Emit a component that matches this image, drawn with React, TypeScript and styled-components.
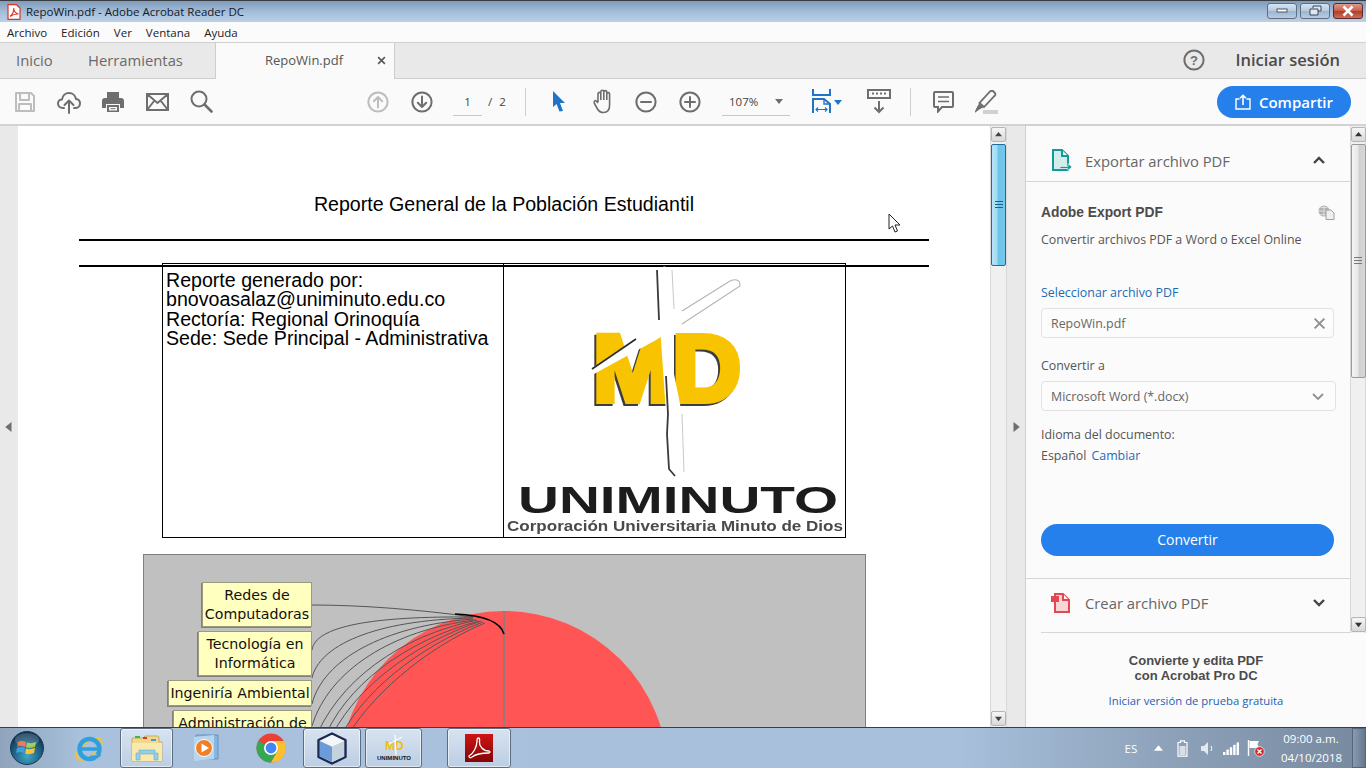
import React from 'react'
import styled, { createGlobalStyle } from 'styled-components'

const GlobalStyle = createGlobalStyle`
  html, body { margin: 0; padding: 0; height: 768px; overflow: hidden; background: #fafafa; }
  * { box-sizing: border-box; }
  body { font-family: "Open Sans", "Liberation Sans", sans-serif; color: #505050; }
`

const Screen = styled.div`
  width: 1366px;
  height: 768px;
  display: flex;
  flex-direction: column;
  overflow: hidden;
`

/* window chrome */
const TitleBar = styled.div`
  height: 22px;
  flex: none;
  display: flex;
  align-items: center;
  padding: 0 3px 0 7px;
  border-top: 1px solid #3a3d42;
  background: linear-gradient(180deg, #7f9cbb 0%, #a5bfdb 55%, #bcd0e6 100%);
`
const TitleText = styled.span`
  margin-left: 5px;
  font-size: 11.5px;
  color: #14181f;
`
const WindowButtons = styled.div`
  margin-left: auto;
  display: flex;
  gap: 3px;
  margin-top: -2px;
`
const WindowButton = styled.div<{ $close?: boolean }>`
  width: 30px;
  height: 16px;
  display: flex;
  align-items: center;
  justify-content: center;
  border-radius: 3px;
  border: 1px solid ${p => (p.$close ? '#5c2a2a' : '#5f6f82')};
  background: ${p =>
    p.$close
      ? 'linear-gradient(180deg, #dc9a8d 0%, #c9604c 48%, #b03c28 52%, #c9705c 100%)'
      : 'linear-gradient(180deg, #d6e3f0 0%, #b7cbe0 48%, #9db5cf 52%, #b8cde2 100%)'};
`
const MenuBar = styled.div`
  height: 20px;
  flex: none;
  display: flex;
  align-items: center;
  gap: 14px;
  padding-left: 7px;
  background: #fbfbfb;
  font-size: 11.5px;
  color: #222;
`
const TabBar = styled.div`
  height: 37px;
  flex: none;
  display: flex;
  align-items: stretch;
  background: #e9e9e9;
  border-top: 1px solid #d0d0d0;
  border-bottom: 1px solid #cdcdcd;
`
const NavTab = styled.div<{ $width: number }>`
  width: ${p => p.$width}px;
  display: flex;
  align-items: center;
  padding: 0 0 2px 16px;
  font-size: 14.8px;
  color: #6a6a6a;
`
const DocTab = styled.div`
  width: 180px;
  margin-bottom: -1px;
  padding-bottom: 2px;
  display: flex;
  align-items: center;
  background: #fafafa;
  border-left: 1px solid #cdcdcd;
  border-right: 1px solid #cdcdcd;
  font-size: 13px;
  color: #555;
`
const DocTabName = styled.span`
  margin-left: 49px;
`
const DocTabClose = styled.span`
  margin-left: auto;
  margin-right: 8px;
  display: flex;
`
const SignIn = styled.div`
  margin-left: auto;
  margin-right: 26px;
  padding-bottom: 2px;
  display: flex;
  align-items: center;
  gap: 30px;
  font-size: 16.5px;
  font-weight: 600;
  color: #4b4b4b;
`

/* toolbar */
const Toolbar = styled.div`
  height: 47px;
  flex: none;
  display: flex;
  align-items: center;
  padding-left: 3px;
  background: #fafafa;
  border-bottom: 2px solid #d2d2d2;
`
const ToolSlot = styled.div<{ $gapLeft?: number; $width?: number }>`
  width: ${p => p.$width ?? 44}px;
  margin-left: ${p => p.$gapLeft ?? 0}px;
  display: flex;
  align-items: center;
  justify-content: center;
  height: 30px;
  flex: none;
`
const PageField = styled.div`
  width: 29px;
  height: 28px;
  margin-left: 9px;
  display: flex;
  align-items: center;
  justify-content: center;
  border-bottom: 1px solid #c8c8c8;
  font-size: 11.5px;
  color: #444;
`
const PageTotal = styled.span`
  margin-left: 6px;
  width: 37px;
  font-size: 11.5px;
  word-spacing: 4px;
  color: #444;
`
const ToolDivider = styled.div<{ $gapLeft: number }>`
  width: 1px;
  height: 28px;
  margin-left: ${p => p.$gapLeft}px;
  background: #cfcfcf;
  flex: none;
`
const ZoomField = styled.div`
  width: 68px;
  height: 28px;
  margin-left: 10px;
  padding: 0 7px;
  display: flex;
  align-items: center;
  justify-content: space-between;
  border-bottom: 1px solid #c8c8c8;
  font-size: 11.5px;
  color: #444;
`
const ShareButton = styled.div`
  margin-left: auto;
  margin-right: 15px;
  width: 134px;
  height: 32px;
  display: flex;
  align-items: center;
  justify-content: center;
  gap: 8px;
  border-radius: 16px;
  background: #2680eb;
  color: #fff;
  font-size: 15px;
  font-weight: 600;
`

/* main area */
const Main = styled.div`
  height: 601px;
  flex: none;
  display: flex;
  background: #fafafa;
`
const Gutter = styled.div<{ $width: number; $line?: boolean }>`
  width: ${p => p.$width}px;
  flex: none;
  display: flex;
  align-items: center;
  justify-content: center;
  background: #e9e9e9;
  border-right: ${p => (p.$line ? '1px solid #cfcfcf' : 'none')};
`
const Canvas = styled.div`
  position: relative;
  width: 972px;
  flex: none;
  overflow: hidden;
  background: #fff;
  padding-left: 61px;
`
const DocColumn = styled.div`
  width: 850px;
  font-family: "Liberation Sans", Arial, sans-serif;
  color: #000;
`
const DocTitle = styled.div`
  margin-top: 66px;
  height: 24px;
  line-height: 24px;
  text-align: center;
  font-size: 19.6px;
`
const DocRule = styled.div<{ $top: number }>`
  height: 2px;
  margin-top: ${p => p.$top}px;
  background: #000;
`
const ReportTable = styled.div`
  position: relative;
  margin: -4px 0 0 83px;
  width: 684px;
  height: 275px;
  display: grid;
  grid-template-columns: 341px 1fr;
  border: 1px solid #000;
`
const ReportCell = styled.div`
  padding: 6.6px 3px;
  font-size: 19.6px;
  line-height: 19.5px;
  border-right: 1px solid #000;
`
const LogoCell = styled.div`
  display: flex;
  align-items: flex-start;
  justify-content: flex-start;
`
const Chart = styled.div`
  position: relative;
  margin: 16px 0 0 64px;
  width: 723px;
  height: 420px;
  background: #c0c0c0;
  border: 1px solid #808080;
`
const ChartDrawing = styled.svg`
  position: absolute;
  left: -1px;
  top: -1px;
`
const ChartLabels = styled.div`
  position: relative;
  width: 168px;
  padding-top: 27px;
  display: flex;
  flex-direction: column;
  align-items: flex-end;
  gap: 4px;
`
const ChartLabel = styled.div<{ $width: number }>`
  width: ${p => p.$width}px;
  padding: 3px 0 2px;
  text-align: center;
  white-space: nowrap;
  background: #ffffc0;
  border: 1px solid #9a9a80;
  box-shadow: -1px 1px 0 #808080;
  font-family: "DejaVu Sans", Tahoma, sans-serif;
  font-size: 14.2px;
  line-height: 19px;
  color: #111;
`
const Pointer = styled.svg`
  position: absolute;
  left: 870px;
  top: 87px;
`
const Scrollbar = styled.div<{ $width?: number }>`
  width: ${p => p.$width ?? 17}px;
  flex: none;
  display: flex;
  flex-direction: column;
  align-items: center;
  padding: 1px 0;
  background: #f0f0f0;
  border-left: 1px solid #d8d8d8;
  border-right: 1px solid #d8d8d8;
`
const ScrollArrow = styled.div<{ $down?: boolean }>`
  width: 15px;
  height: 15px;
  flex: none;
  margin-top: ${p => (p.$down ? 'auto' : '0')};
  display: flex;
  align-items: center;
  justify-content: center;
  border: 1px solid #b5b5b5;
  border-radius: 2px;
  background: linear-gradient(180deg, #f6f6f6, #d8d8d8);
`
const ScrollThumb = styled.div<{ $height: number; $blue?: boolean }>`
  width: 15px;
  height: ${p => p.$height}px;
  margin-top: 2px;
  flex: none;
  display: flex;
  align-items: center;
  justify-content: center;
  border-radius: 2px;
  border: 1px solid ${p => (p.$blue ? '#1f6b99' : '#9a9a9a')};
  background: ${p =>
    p.$blue
      ? 'linear-gradient(90deg, #b6e4f8 0%, #a4dcf5 35%, #6cc4ea 50%, #74c8ec 100%)'
      : 'linear-gradient(90deg, #f4f4f4 0%, #e8e8e8 45%, #d0d0d0 55%, #d8d8d8 100%)'};
`
const Grip = styled.div<{ $color: string }>`
  width: 8px;
  height: 8px;
  background: repeating-linear-gradient(180deg, ${p => p.$color} 0 1px, transparent 1px 3px);
`

/* right panel */
const SidePanel = styled.div`
  width: 340px;
  flex: none;
  display: flex;
  flex-direction: column;
  background: #fbfbfb;
`
const PanelTop = styled.div`
  height: 507px;
  flex: none;
  display: flex;
`
const PanelScroll = styled.div`
  width: 324px;
  flex: none;
  display: flex;
  flex-direction: column;
`
const SectionHead = styled.div<{ $top?: number; $height: number; $padBottom?: number; $inset?: number }>`
  margin-top: ${p => p.$top ?? 0}px;
  margin-left: ${p => p.$inset ?? 0}px;
  height: ${p => p.$height}px;
  flex: none;
  display: flex;
  align-items: center;
  padding-left: ${p => 25 - (p.$inset ?? 0)}px;
  padding-bottom: ${p => p.$padBottom ?? 0}px;
  font-size: 14.8px;
  color: #666;
  border-bottom: 1px solid #d6d6d6;
`
const SectionIcon = styled.span`
  width: 34px;
  display: flex;
`
const SectionChevron = styled.span`
  margin-left: auto;
  margin-right: 24px;
  display: flex;
`
const PanelBody = styled.div`
  padding: 0 0 0 15px;
  height: 397px;
  flex: none;
  display: flex;
  flex-direction: column;
  border-bottom: 1px solid #d6d6d6;
  font-size: 12.4px;
  color: #555;
`
const ExportHead = styled.div`
  margin-top: 21px;
  height: 18px;
  padding-right: 15px;
  display: flex;
  align-items: center;
  justify-content: space-between;
  font-family: "Liberation Sans", Arial, sans-serif;
  font-size: 13.8px;
  font-weight: 700;
  color: #4b4b4b;
`
const BodyLine = styled.div<{ $top: number; $blue?: boolean }>`
  margin-top: ${p => p.$top}px;
  height: 17px;
  line-height: 17px;
  color: ${p => (p.$blue ? '#1c6bb5' : '#555')};
`
const BlueWord = styled.span`
  margin-left: 5px;
  color: #1c6bb5;
`
const FieldBox = styled.div<{ $width: number; $height: number; $top: number }>`
  width: ${p => p.$width}px;
  height: ${p => p.$height}px;
  margin-top: ${p => p.$top}px;
  padding: 0 7px 0 9px;
  display: flex;
  align-items: center;
  justify-content: space-between;
  background: #fcfcfc;
  border: 1px solid #e2e2e2;
  border-radius: 4px;
  color: #666;
`
const FieldChevron = styled.span`
  display: flex;
  margin-right: 3px;
`
const ConvertButton = styled.div`
  width: 293px;
  height: 32px;
  margin-top: 60px;
  padding-bottom: 2px;
  display: flex;
  align-items: center;
  justify-content: center;
  border-radius: 16px;
  background: #2680eb;
  color: #fff;
  font-size: 14px;
`
const Promo = styled.div`
  flex: 1;
  display: flex;
  flex-direction: column;
  align-items: center;
  padding-top: 20px;
`
const PromoTitle = styled.div`
  font-family: "Liberation Sans", Arial, sans-serif;
  font-size: 13px;
  line-height: 15px;
  font-weight: 700;
  text-align: center;
  color: #4b4b4b;
`
const PromoLink = styled.div`
  margin-top: 10px;
  font-size: 11.3px;
  color: #1c5fb5;
`

/* taskbar */
const Taskbar = styled.div`
  height: 41px;
  flex: none;
  display: flex;
  align-items: stretch;
  border-top: 1px solid #2f4054;
  background: linear-gradient(90deg, #8fa4bc 0%, #a9c1dc 6%, #a8c0dc 70%, #8ea3bb 85%, #77899f 100%);
`
const TaskSlot = styled.div<{ $width: number; $gapLeft?: number; $pinned?: boolean }>`
  width: ${p => p.$width}px;
  margin-left: ${p => p.$gapLeft ?? 0}px;
  flex: none;
  display: flex;
  align-items: center;
  justify-content: center;
  ${p =>
    p.$pinned &&
    `border: 1px solid #5d6e82;
     border-radius: 3px;
     box-shadow: inset 0 0 0 1px rgba(255,255,255,.55);
     background: linear-gradient(180deg, rgba(255,255,255,.55), rgba(255,255,255,.22));`}
`
const Tray = styled.div`
  margin-left: auto;
  display: flex;
  align-items: center;
  color: #fff;
`
const TrayLang = styled.span`
  width: 22px;
  font-size: 11.5px;
`
const TraySlot = styled.div`
  width: 24.3px;
  display: flex;
  align-items: center;
  justify-content: center;
`
const Clock = styled.div`
  width: 60px;
  margin-left: 13px;
  text-align: center;
  font-size: 11.5px;
  line-height: 19px;
`
const ShowDesktop = styled.div`
  width: 14px;
  height: 100%;
  margin-left: 11px;
  border: 1px solid #55667a;
  background: linear-gradient(90deg, #8a9bb0, #66788e);
`

/* icons */
const GREY = '#6e6e6e'
const Line = { fill: 'none', strokeWidth: 2, strokeLinecap: 'round', strokeLinejoin: 'round' } as const

const Triangle = ({ dir, color = '#6f6f6f', size = 7 }: { dir: 'up' | 'down' | 'left' | 'right'; color?: string; size?: number }) => {
  const pts = { up: '0,6 8,6 4,1', down: '0,2 8,2 4,7', left: '6,0 6,8 1,4', right: '2,0 2,8 7,4' }[dir]
  return (
    <svg width={size} height={size} viewBox="0 0 8 8">
      <polygon points={pts} fill={color} />
    </svg>
  )
}
const Chevron = ({ up, color = '#444', w = 2.4 }: { up?: boolean; color?: string; w?: number }) => (
  <svg width="14" height="9" viewBox="0 0 14 9">
    <path d={up ? 'M2 7 L7 2 L12 7' : 'M2 2 L7 7 L12 2'} stroke={color} strokeWidth={w} fill="none" />
  </svg>
)
const CircleArrow = ({ down, color }: { down?: boolean; color: string }) => (
  <svg width="22" height="22" viewBox="0 0 22 22">
    <circle cx="11" cy="11" r="9.6" stroke={color} {...Line} />
    <path d={down ? 'M11 5.5 V16 M6.8 11.8 L11 16 L15.2 11.8' : 'M11 16.5 V6 M6.8 10.2 L11 6 L15.2 10.2'} stroke={color} {...Line} />
  </svg>
)
const CirclePlus = ({ plus }: { plus?: boolean }) => (
  <svg width="22" height="22" viewBox="0 0 22 22">
    <circle cx="11" cy="11" r="9.6" stroke={GREY} {...Line} />
    <path d={plus ? 'M6 11 H16 M11 6 V16' : 'M6 11 H16'} stroke={GREY} {...Line} />
  </svg>
)
const SaveIcon = () => (
  <svg width="22" height="22" viewBox="0 0 22 22">
    <path d="M2 2 H17 L20 5 V20 H2 Z M6 2 V9 H15 V2 M5 20 V13 H17 V20" stroke="#bdbdbd" {...Line} />
  </svg>
)
const UploadIcon = () => (
  <svg width="24" height="24" viewBox="0 0 24 24">
    <path d="M7 18 H6 C2.5 18 1 15.5 1 13.5 C1 11 3 9.5 5 9.5 C5.5 5.5 8.5 3 12 3 C16 3 18.5 6 19 9 C21.5 9.3 23 11.3 23 13.5 C23 16 21 18 18 18 H17" stroke={GREY} {...Line} />
    <path d="M12 23 V11 M7.5 15 L12 10.5 L16.5 15" stroke={GREY} {...Line} />
  </svg>
)
const PrintIcon = () => (
  <svg width="22" height="22" viewBox="0 0 22 22">
    <path d="M5 1 H17 V7 H5 Z" fill={GREY} />
    <path d="M3 7 H19 Q22 7 22 10 V17 H18 V13 H4 V17 H0 V10 Q0 7 3 7 Z" fill={GREY} />
    <path d="M5 14 H17 V21 H5 Z" fill={GREY} />
    <path d="M7 16 H15 V19.5 H7 Z" fill="#fafafa" />
    <path d="M8.5 17.7 H13.5" stroke={GREY} strokeWidth="1" />
  </svg>
)
const MailIcon = () => (
  <svg width="23" height="18" viewBox="0 0 23 18">
    <path d="M1 1 H22 V17 H1 Z M1 1 L11.5 10 L22 1 M1 17 L8.5 7.5 M22 17 L14.5 7.5" stroke={GREY} strokeWidth="2" fill="none" />
  </svg>
)
const SearchIcon = () => (
  <svg width="23" height="23" viewBox="0 0 23 23">
    <circle cx="9" cy="9" r="7.5" stroke={GREY} {...Line} />
    <path d="M14.5 14.5 L21.5 21.5" stroke={GREY} strokeWidth="2.6" strokeLinecap="round" />
  </svg>
)
const ArrowTool = () => (
  <svg width="14" height="21" viewBox="-1 0 14 21">
    <path d="M1 0 L13 12 H8 L11 20 L7.5 20.5 L4.5 13 L1 16 Z" fill="#1f74c8" />
  </svg>
)
const HandIcon = () => (
  <svg width="22" height="25" viewBox="-2 0 22 25">
    <path d="M5 13 V5 Q5 3.4 6.4 3.4 Q7.8 3.4 7.8 5 V11 M7.8 11 V2.8 Q7.8 1.2 9.2 1.2 Q10.8 1.2 10.8 2.8 V11 M10.8 11 V3 Q10.8 1.6 12.2 1.6 Q13.8 1.6 13.8 3 V11 M13.8 11 V5 Q13.8 3.6 15.2 3.6 Q16.6 3.6 16.6 5 V16 Q16.6 23.5 10.5 23.5 Q6.5 23.5 4.5 20 L1.2 14 Q0.8 12 2.2 11.6 Q3.4 11.4 5 14" stroke={GREY} strokeWidth="1.6" fill="none" strokeLinejoin="round" />
  </svg>
)
const FitIcon = () => (
  <svg width="20" height="25" viewBox="0 0 20 25">
    <path d="M1 0 V6 H18 V0" stroke="#1f74c8" strokeWidth="2" fill="none" />
    <path d="M1 24 V10 H12 L18 15 V24" stroke="#1f74c8" strokeWidth="2" fill="none" />
    <path d="M12 10 V15 H18" stroke="#1f74c8" strokeWidth="1.4" fill="none" />
    <path d="M4 20.5 H15 M6 18.5 L4 20.5 L6 22.5 M13 18.5 L15 20.5 L13 22.5" stroke="#1f74c8" strokeWidth="1.2" fill="none" />
  </svg>
)
const ReadIcon = () => (
  <svg width="24" height="25" viewBox="0 0 24 25">
    <path d="M1 1 H23 V9 H1 Z" stroke={GREY} strokeWidth="2" fill="none" />
    <path d="M5 4.6 H7 M9 4.6 H11 M13 4.6 H15 M17 4.6 H19" stroke={GREY} strokeWidth="2" />
    <path d="M12 12 V23 M7.5 18.5 L12 23 L16.5 18.5" stroke={GREY} strokeWidth="2" fill="none" />
  </svg>
)
const CommentIcon = () => (
  <svg width="21" height="22" viewBox="0 0 21 22">
    <path d="M2 1 H19 Q20 1 20 2 V15 Q20 16 19 16 H9 L5 20.5 V16 H2 Q1 16 1 15 V2 Q1 1 2 1 Z" stroke={GREY} strokeWidth="2" fill="none" />
    <path d="M5 6 H16 M5 10.5 H16" stroke={GREY} strokeWidth="1.6" />
  </svg>
)
const PenIcon = () => (
  <svg width="25" height="24" viewBox="2 0 25 24">
    <path d="M10 20 H25 V24 H10 Z" fill="#d0d0d0" />
    <path d="M17 1.5 Q19 0 20.5 1.5 L22 3 Q23 4.5 21.5 6 L11 17 L6.5 13 Z" stroke={GREY} strokeWidth="1.8" fill="none" />
    <path d="M6 13.5 L10.5 17.5 L7 19 L1 23.5 L3.5 18 Z" fill={GREY} />
  </svg>
)
const HelpIcon = () => (
  <svg width="22" height="22" viewBox="0 0 22 22">
    <circle cx="11" cy="11" r="9.6" stroke={GREY} {...Line} />
    <text x="11" y="15.5" textAnchor="middle" fontFamily="Liberation Sans, sans-serif" fontWeight="700" fontSize="13" fill={GREY}>?</text>
  </svg>
)
const ShareIcon = () => (
  <svg width="16" height="16" viewBox="0 0 16 16">
    <path d="M4.5 5 H1 V15 H15 V5 H11.5" stroke="#fff" strokeWidth="1.4" fill="none" />
    <path d="M8 11 V1.5 M5 4.3 L8 1.3 L11 4.3" stroke="#fff" strokeWidth="1.6" fill="none" />
  </svg>
)
const ExportIcon = () => (
  <svg width="21" height="23" viewBox="0 0 21 23">
    <path d="M2 1 H11 L17 7 V21 H2 Z" fill="#d2ecea" stroke="#13999a" strokeWidth="2" />
    <path d="M11 1 V7 H17" fill="#fff" stroke="#13999a" strokeWidth="2" />
    <path d="M9 17.5 H17 V14.5 L21 18 L17 21.5 V19.5 H9 Z" fill="#13999a" stroke="#fbfbfb" strokeWidth=".6" />
  </svg>
)
const CreateIcon = () => (
  <svg width="21" height="22" viewBox="0 0 21 22">
    <path d="M4 2 H12 L18 8 V20 H4 Z" fill="#f7d5d7" stroke="#e34850" strokeWidth="2" />
    <path d="M12 2 V8 H18" fill="#fff" stroke="#e34850" strokeWidth="2" />
    <rect x="0" y="4" width="8" height="6" fill="#e34850" />
  </svg>
)
const CloudDocIcon = () => (
  <svg width="17" height="15" viewBox="0 0 17 15">
    <circle cx="6" cy="6" r="5.5" fill="#b2b2b2" />
    <path d="M0.5 6 H11.5 M6 .5 V11.5 M2.5 2.5 H9.5 M2.5 9.5 H9.5" stroke="#e6e6e6" strokeWidth=".8" />
    <path d="M8 5 H13 L16 8 V14.5 H8 Z" fill="#efefef" stroke="#a0a0a0" strokeWidth="1" />
  </svg>
)
const CrossIcon = ({ size, color, w }: { size: number; color: string; w: number }) => (
  <svg width={size} height={size} viewBox="0 0 12 12">
    <path d="M1.5 1.5 L10.5 10.5 M10.5 1.5 L1.5 10.5" stroke={color} strokeWidth={w} />
  </svg>
)
const PdfFileIcon = () => (
  <svg width="14" height="16" viewBox="0 0 14 16">
    <path d="M1 .7 H9.5 L13 4 V15.3 H1 Z" fill="#fff" stroke="#d8352a" strokeWidth="1.2" />
    <path d="M3 12.5 C5.5 10.5 7 7 6.6 4.2 C7 7 8.5 9.5 11.5 10 C8.5 9.8 5.5 10.8 3 12.5 Z" fill="none" stroke="#d8352a" strokeWidth="1.1" />
  </svg>
)

const LogoFace = 'Liberation Sans, sans-serif'
const LogoDrawing = () => (
  <svg width="341" height="273" viewBox="0 0 341 273" style={{ filter: 'blur(.7px)' }}>
    <text x="87" y="139" fontFamily={LogoFace} fontWeight="700" fontSize="94" textLength="148" lengthAdjust="spacingAndGlyphs" fill="#3d3d3d" stroke="#3d3d3d" strokeWidth="6">MD</text>
    <text x="89" y="137" fontFamily={LogoFace} fontWeight="700" fontSize="94" textLength="148" lengthAdjust="spacingAndGlyphs" fill="#f8c300" stroke="#f8c300" strokeWidth="6">MD</text>
    {/* diagonal of the cross */}
    <path d="M88 104 L150 62 L172 52 L226 17 Q236 13 236 22 L178 60 L152 76 L90 110 Z" fill="#fff" />
    <path d="M178 47 L226 17 Q236 13 236 22 L178 60" stroke="#b5b5b5" strokeWidth="1.2" fill="none" />
    <path d="M88 105 L132 75" stroke="#2a2a2a" strokeWidth="1.6" fill="none" />
    {/* upright of the cross */}
    <path d="M153 6 Q160 -1 168 6 L170 62 L170 110 L178 150 L180 208 Q176 216 170 212 L164 205 L163 165 L160 120 L156 62 Z" fill="#fff" />
    <path d="M168 6 L170 45 M178 150 L180 208" stroke="#c8c8c8" strokeWidth="1" fill="none" />
    <path d="M153 6 L155 56 M162 112 L164 150 L163 170 L165 205 L171 212" stroke="#3a3a3a" strokeWidth="1.8" fill="none" />
    <text x="14" y="249" fontFamily={LogoFace} fontWeight="700" fontSize="36" textLength="320" lengthAdjust="spacingAndGlyphs" fill="#1c1c1c">UNIMINUTO</text>
    <text x="3" y="267" fontFamily={LogoFace} fontWeight="700" fontSize="15" textLength="336" lengthAdjust="spacingAndGlyphs" fill="#4a4a4a">Corporación Universitaria Minuto de Dios</text>
  </svg>
)

const leaderLines = [
  'M169 51 C 220 51 280 56 330 63',
  'M169 96 C 172 72 230 62 330 63',
  'M169 124 C 176 92 230 66 330 64',
  'M169 150 C 180 106 240 72 330 65',
  'M169 172 C 186 116 250 76 332 66',
  'M170 190 C 194 126 258 82 334 66',
  'M179 190 C 200 132 264 86 336 67',
  'M185 190 C 208 136 270 90 338 67',
  'M194 190 C 216 140 276 92 340 68',
  'M200 190 C 224 144 282 94 342 69',
]

const PieChart = () => (
  <ChartDrawing width="723" height="420" viewBox="0 0 723 420">
    <circle cx="361" cy="221" r="164" fill="#ff5555" />
    <path d="M361 57 V420" stroke="#808080" strokeWidth="1.5" />
    {leaderLines.map(d => (
      <path key={d} d={d} stroke="#555" strokeWidth="1" fill="none" />
    ))}
    <path d="M312 60 Q356 62 361 80" stroke="#000" strokeWidth="1.6" fill="none" />
  </ChartDrawing>
)

/* taskbar logos */
const WindowsOrb = () => (
  <svg width="34" height="34" viewBox="0 0 34 34">
    <defs>
      <radialGradient id="orb" cx="50%" cy="75%" r="70%">
        <stop offset="0" stopColor="#3fa6c9" />
        <stop offset="1" stopColor="#0b2f4d" />
      </radialGradient>
    </defs>
    <circle cx="17" cy="17" r="16.5" fill="url(#orb)" stroke="#1d3c58" />
    <path d="M8 11 Q12 9 16 11 L15 16 Q11 14 7 16 Z" fill="#e8603c" />
    <path d="M17 11.5 Q21 13 26 11 L25 16 Q20 18 16 16.5 Z" fill="#8ec63f" />
    <path d="M7 17 Q11 15 15 17 L14 22 Q10 20 6 22 Z" fill="#3d9fe0" />
    <path d="M16 17.5 Q20 19 25 17 L24 22 Q19 24 15 22.5 Z" fill="#fcc52f" />
    <ellipse cx="17" cy="9" rx="12" ry="7" fill="#fff" opacity=".18" />
  </svg>
)
const IeLogo = () => (
  <svg width="32" height="32" viewBox="0 0 32 32">
    <ellipse cx="16" cy="17" rx="15" ry="7" fill="none" stroke="#f2c530" strokeWidth="2" transform="rotate(-38 16 17)" />
    <circle cx="16.5" cy="17" r="10" fill="none" stroke="#2f9fe0" strokeWidth="4.5" />
    <path d="M7 17 H27" stroke="#2f9fe0" strokeWidth="3.5" />
    <path d="M20 22 L30 22 L30 27 L17 27 Z" fill="#a8c0dc" />
    <path d="M17 25 Q23 27 27 22" stroke="#2f9fe0" strokeWidth="3.5" fill="none" />
  </svg>
)
const FolderLogo = () => (
  <svg width="32" height="29" viewBox="0 0 32 29">
    <path d="M1 4 H12 L14 2 H26 Q28 2 28 4 V8 H31 V27 H1 Z" fill="#f0d98c" stroke="#b8a163" strokeWidth=".8" />
    <rect x="4" y="2" width="5" height="2" fill="#3fb54a" />
    <rect x="12" y="3" width="4" height="2" fill="#d8372b" />
    <rect x="20" y="5" width="5" height="2" fill="#3a9be0" />
    <path d="M1 9 H31 V27 H1 Z" fill="#f9e9ad" />
    <path d="M5 26 V19 H8 V16 H24 V19 H27 V26 H23 V20 H9 V26 Z" fill="#8fd0ea" stroke="#6fa9c9" strokeWidth=".6" />
  </svg>
)
const MediaLogo = () => (
  <svg width="30" height="32" viewBox="0 0 30 32">
    <path d="M4 3 H26 V27 H4 Z" fill="#87b6e0" stroke="#5f93c6" />
    <path d="M2 5 L22 3 V27 L2 29 Z" fill="#b6d6ef" />
    <circle cx="12" cy="16" r="8.5" fill="#f08028" stroke="#fff" strokeWidth="1" />
    <path d="M9.5 11.5 L17 16 L9.5 20.5 Z" fill="#fff" />
  </svg>
)
const ChromeLogo = () => (
  <svg width="30" height="30" viewBox="0 0 30 30">
    <circle cx="15" cy="15" r="14.5" fill="#ea4335" />
    <path d="M15 15 L2.5 7.7 A14.5 14.5 0 0 0 15 29.5 L22 17 Z" fill="#34a853" />
    <path d="M15 8 H28 A14.5 14.5 0 0 1 15 29.5 L22 17 Z" fill="#fbc02d" />
    <circle cx="15" cy="15" r="7" fill="#fff" />
    <circle cx="15" cy="15" r="5.4" fill="#4285f4" />
  </svg>
)
const BoxLogo = () => (
  <svg width="32" height="33" viewBox="0 0 32 33">
    <path d="M16 1.5 L29.5 8 V25 L16 31.5 L2.5 25 V8 Z" fill="#dfe8ef" stroke="#1d2a54" strokeWidth="2.4" strokeLinejoin="round" />
    <path d="M4 9 L16 14.5 V30 L4 24.5 Z" fill="#6c9bd8" />
    <path d="M16 14.5 L28 9 V24.5 L16 30 Z" fill="#c3d2dc" />
    <path d="M4 9 L16 3 L28 9 L16 14.5 Z" fill="#f2f6f9" />
  </svg>
)
const MiniLogo = () => (
  <svg width="34" height="30" viewBox="0 0 34 30">
    <text x="8" y="17" fontFamily={LogoFace} fontWeight="700" fontSize="12" fill="#f0bf10">MD</text>
    <path d="M18 2 L19 22 M12 11 L25 4" stroke="#fff" strokeWidth="1.2" />
    <text x="0" y="27" fontFamily={LogoFace} fontWeight="700" fontSize="5.6" textLength="34" lengthAdjust="spacingAndGlyphs" fill="#111">UNIMINUTO</text>
  </svg>
)
const AcrobatLogo = () => (
  <svg width="28" height="28" viewBox="0 0 28 28">
    <defs>
      <linearGradient id="acro" x1="0" y1="0" x2="0" y2="1">
        <stop offset="0" stopColor="#cf1414" />
        <stop offset="1" stopColor="#840606" />
      </linearGradient>
    </defs>
    <rect width="28" height="28" fill="url(#acro)" />
    <path d="M4 22 C8 20 12 13 12 7 Q12 4 13.5 4 Q15 4 14.5 8 C14 12 18 17 24 17 Q26 18 24 19 C19 19 12 19 7 23 Q4 25 4 22 Z" fill="none" stroke="#fff" strokeWidth="1.3" />
  </svg>
)
const TrayBattery = () => (
  <svg width="11" height="17" viewBox="0 0 11 17">
    <path d="M3.5 .8 H7.5 V2.5 H10 V16.2 H1 V2.5 H3.5 Z" fill="none" stroke="#fff" strokeWidth="1.2" />
    <rect x="2.5" y="6" width="6" height="9" fill="#d8dfe6" />
  </svg>
)
const TraySpeaker = () => (
  <svg width="15" height="15" viewBox="0 0 15 15">
    <path d="M1 5 H4 L8 1 V14 L4 10 H1 Z" fill="#e4e9ee" />
    <path d="M11 5 Q12.5 7.5 11 10" stroke="#fff" strokeWidth="1" fill="none" />
  </svg>
)
const TraySignal = () => (
  <svg width="17" height="13" viewBox="0 0 17 13">
    {[0, 1, 2, 3, 4].map(i => (
      <rect key={i} x={i * 3.4} y={10 - i * 2.4} width="2.4" height={3 + i * 2.4} fill="#fff" />
    ))}
  </svg>
)
const TrayFlag = () => (
  <svg width="18" height="17" viewBox="0 0 18 17">
    <path d="M1.5 0 V16" stroke="#fff" strokeWidth="1.4" />
    <path d="M2.5 1 H12 L10.5 4 L12 8 H2.5 Z" fill="#fff" />
    <circle cx="12.5" cy="11.5" r="4.8" fill="#d32c2c" stroke="#fff" strokeWidth=".7" />
    <path d="M10.5 9.5 L14.5 13.5 M14.5 9.5 L10.5 13.5" stroke="#fff" strokeWidth="1.2" />
  </svg>
)

export default function App() {
  return (
    <>
      <GlobalStyle />
      <Screen>
        <TitleBar>
          <PdfFileIcon />
          <TitleText>RepoWin.pdf - Adobe Acrobat Reader DC</TitleText>
          <WindowButtons>
            <WindowButton>
              <svg width="12" height="6" viewBox="0 0 12 6"><rect x="1" y="1" width="10" height="3" fill="#fff" stroke="#46566a" /></svg>
            </WindowButton>
            <WindowButton>
              <svg width="13" height="11" viewBox="0 0 13 11"><path d="M4 3 V1 H12 V6 H9 M1 4 H9 V10 H1 Z" fill="#dfe8f1" stroke="#36465a" /></svg>
            </WindowButton>
            <WindowButton $close>
              <CrossIcon size={12} color="#fff" w={2.6} />
            </WindowButton>
          </WindowButtons>
        </TitleBar>

        <MenuBar>
          <span>Archivo</span>
          <span>Edición</span>
          <span>Ver</span>
          <span>Ventana</span>
          <span>Ayuda</span>
        </MenuBar>

        <TabBar>
          <NavTab $width={72}>Inicio</NavTab>
          <NavTab $width={143}>Herramientas</NavTab>
          <DocTab>
            <DocTabName>RepoWin.pdf</DocTabName>
            <DocTabClose>
              <CrossIcon size={9} color="#555" w={2} />
            </DocTabClose>
          </DocTab>
          <SignIn>
            <HelpIcon />
            Iniciar sesión
          </SignIn>
        </TabBar>

        <Toolbar>
          <ToolSlot><SaveIcon /></ToolSlot>
          <ToolSlot><UploadIcon /></ToolSlot>
          <ToolSlot><PrintIcon /></ToolSlot>
          <ToolSlot><MailIcon /></ToolSlot>
          <ToolSlot><SearchIcon /></ToolSlot>
          <ToolSlot $gapLeft={133}><CircleArrow color="#bdbdbd" /></ToolSlot>
          <ToolSlot><CircleArrow down color={GREY} /></ToolSlot>
          <PageField>1</PageField>
          <PageTotal>/ 2</PageTotal>
          <ToolDivider $gapLeft={0} />
          <ToolSlot $gapLeft={10}><ArrowTool /></ToolSlot>
          <ToolSlot><HandIcon /></ToolSlot>
          <ToolSlot><CirclePlus /></ToolSlot>
          <ToolSlot><CirclePlus plus /></ToolSlot>
          <ZoomField>
            107%
            <Triangle dir="down" size={8} />
          </ZoomField>
          <ToolSlot $gapLeft={20} $width={24}><FitIcon /></ToolSlot>
          <Triangle dir="down" color="#1f74c8" size={8} />
          <ToolSlot $gapLeft={20} $width={34}><ReadIcon /></ToolSlot>
          <ToolDivider $gapLeft={14} />
          <ToolSlot $gapLeft={10}><CommentIcon /></ToolSlot>
          <ToolSlot><PenIcon /></ToolSlot>
          <ShareButton>
            <ShareIcon />
            Compartir
          </ShareButton>
        </Toolbar>

        <Main>
          <Gutter $width={18}><Triangle dir="left" size={10} /></Gutter>
          <Canvas>
            <DocColumn>
              <DocTitle>Reporte General de la Población Estudiantil</DocTitle>
              <DocRule $top={23} />
              <DocRule $top={24} />
              <ReportTable>
                <ReportCell>
                  Reporte generado por:<br />
                  bnovoasalaz@uniminuto.edu.co<br />
                  Rectoría: Regional Orinoquía<br />
                  Sede: Sede Principal - Administrativa
                </ReportCell>
                <LogoCell><LogoDrawing /></LogoCell>
              </ReportTable>
              <Chart>
                <PieChart />
                <ChartLabels>
                  <ChartLabel $width={110}>Redes de<br />Computadoras</ChartLabel>
                  <ChartLabel $width={114}>Tecnología en<br />Informática</ChartLabel>
                  <ChartLabel $width={144}>Ingeniría Ambiental</ChartLabel>
                  <ChartLabel $width={139}>Administración de<br />Empresas</ChartLabel>
                </ChartLabels>
              </Chart>
            </DocColumn>
            <Pointer width="14" height="21" viewBox="0 0 14 21">
              <path d="M1 1 L1 16 L4.5 13 L7 19 L9.5 18 L7 12 L12 12 Z" fill="#fff" stroke="#222" strokeWidth="1" />
            </Pointer>
          </Canvas>
          <Scrollbar>
            <ScrollArrow><Triangle dir="up" color="#444" /></ScrollArrow>
            <ScrollThumb $height={122} $blue><Grip $color="#1d5f8a" /></ScrollThumb>
            <ScrollArrow $down><Triangle dir="down" color="#444" /></ScrollArrow>
          </Scrollbar>
          <Gutter $width={19} $line><Triangle dir="right" size={10} /></Gutter>

          <SidePanel>
            <PanelTop>
              <PanelScroll>
                <SectionHead $top={14} $height={42}>
                  <SectionIcon><ExportIcon /></SectionIcon>
                  Exportar archivo PDF
                  <SectionChevron><Chevron up /></SectionChevron>
                </SectionHead>
                <PanelBody>
                  <ExportHead>
                    Adobe Export PDF
                    <CloudDocIcon />
                  </ExportHead>
                  <BodyLine $top={10}>Convertir archivos PDF a Word o Excel Online</BodyLine>
                  <BodyLine $top={36} $blue>Seleccionar archivo PDF</BodyLine>
                  <FieldBox $width={293} $height={30} $top={7}>
                    RepoWin.pdf
                    <CrossIcon size={13} color="#8f8f8f" w={1.8} />
                  </FieldBox>
                  <BodyLine $top={19}>Convertir a</BodyLine>
                  <FieldBox $width={295} $height={30} $top={7}>
                    Microsoft Word (*.docx)
                    <FieldChevron><Chevron color="#8f8f8f" w={1.8} /></FieldChevron>
                  </FieldBox>
                  <BodyLine $top={15}>Idioma del documento:</BodyLine>
                  <BodyLine $top={4}>Español<BlueWord>Cambiar</BlueWord></BodyLine>
                  <ConvertButton>Convertir</ConvertButton>
                </PanelBody>
                <SectionHead $height={54} $padBottom={6} $inset={15}>
                  <SectionIcon><CreateIcon /></SectionIcon>
                  Crear archivo PDF
                  <SectionChevron><Chevron /></SectionChevron>
                </SectionHead>
              </PanelScroll>
              <Scrollbar $width={16}>
                <ScrollArrow><Triangle dir="up" color="#333" /></ScrollArrow>
                <ScrollThumb $height={234}><Grip $color="#777" /></ScrollThumb>
                <ScrollArrow $down><Triangle dir="down" color="#333" /></ScrollArrow>
              </Scrollbar>
            </PanelTop>
            <Promo>
              <PromoTitle>Convierte y edita PDF<br />con Acrobat Pro DC</PromoTitle>
              <PromoLink>Iniciar versión de prueba gratuita</PromoLink>
            </Promo>
          </SidePanel>
        </Main>

        <Taskbar>
          <TaskSlot $width={54}><WindowsOrb /></TaskSlot>
          <TaskSlot $width={54} $gapLeft={8}><IeLogo /></TaskSlot>
          <TaskSlot $width={53} $gapLeft={4} $pinned><FolderLogo /></TaskSlot>
          <TaskSlot $width={54} $gapLeft={7}><MediaLogo /></TaskSlot>
          <TaskSlot $width={54} $gapLeft={10}><ChromeLogo /></TaskSlot>
          <TaskSlot $width={58} $gapLeft={5} $pinned><BoxLogo /></TaskSlot>
          <TaskSlot $width={57} $gapLeft={4} $pinned><MiniLogo /></TaskSlot>
          <TaskSlot $width={64} $gapLeft={25} $pinned><AcrobatLogo /></TaskSlot>
          <Tray>
            <TrayLang>ES</TrayLang>
            <TraySlot><Triangle dir="up" color="#fff" size={9} /></TraySlot>
            <TraySlot><TrayBattery /></TraySlot>
            <TraySlot><TraySpeaker /></TraySlot>
            <TraySlot><TraySignal /></TraySlot>
            <TraySlot><TrayFlag /></TraySlot>
            <Clock>09:00 a.m.<br />04/10/2018</Clock>
            <ShowDesktop />
          </Tray>
        </Taskbar>
      </Screen>
    </>
  )
}
